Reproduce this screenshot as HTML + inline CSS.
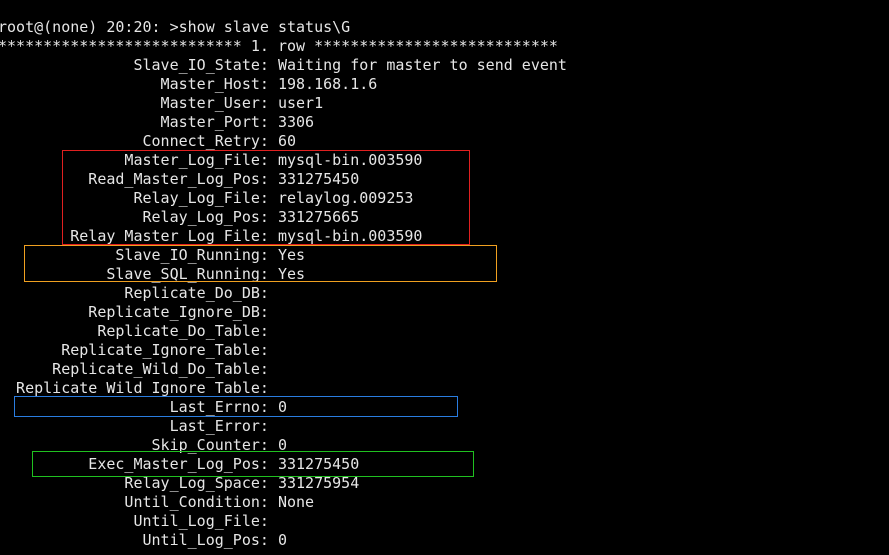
<!DOCTYPE html>
<html><head><meta charset="utf-8"><style>
html,body{margin:0;padding:0;background:#000;width:889px;height:555px;overflow:hidden}
pre{position:absolute;left:-2px;top:18px;margin:0;font-family:"DejaVu Sans Mono","Liberation Mono",monospace;font-size:15px;line-height:19px;color:#e6e6e6}
.b{position:absolute;border:1px solid}
</style></head><body>
<pre>root@(none) 20:20: &gt;show slave status\G
*************************** 1. row ***************************
               Slave_IO_State: Waiting for master to send event
                  Master_Host: 198.168.1.6
                  Master_User: user1
                  Master_Port: 3306
                Connect_Retry: 60
              Master_Log_File: mysql-bin.003590
          Read_Master_Log_Pos: 331275450
               Relay_Log_File: relaylog.009253
                Relay_Log_Pos: 331275665
        Relay_Master_Log_File: mysql-bin.003590
             Slave_IO_Running: Yes
            Slave_SQL_Running: Yes
              Replicate_Do_DB: 
          Replicate_Ignore_DB: 
           Replicate_Do_Table: 
       Replicate_Ignore_Table: 
      Replicate_Wild_Do_Table: 
  Replicate_Wild_Ignore_Table: 
                   Last_Errno: 0
                   Last_Error: 
                 Skip_Counter: 0
          Exec_Master_Log_Pos: 331275450
              Relay_Log_Space: 331275954
              Until_Condition: None
               Until_Log_File: 
                Until_Log_Pos: 0</pre>
<div class="b" style="border-color:#e02020;left:62px;top:150px;width:406px;height:93px"></div>
<div class="b" style="border-color:#f0a020;left:24px;top:245px;width:471px;height:35px"></div>
<div class="b" style="border-color:#2a7de0;left:14px;top:396px;width:442px;height:19px"></div>
<div class="b" style="border-color:#20c020;left:32px;top:451px;width:440px;height:24px"></div>
</body></html>
